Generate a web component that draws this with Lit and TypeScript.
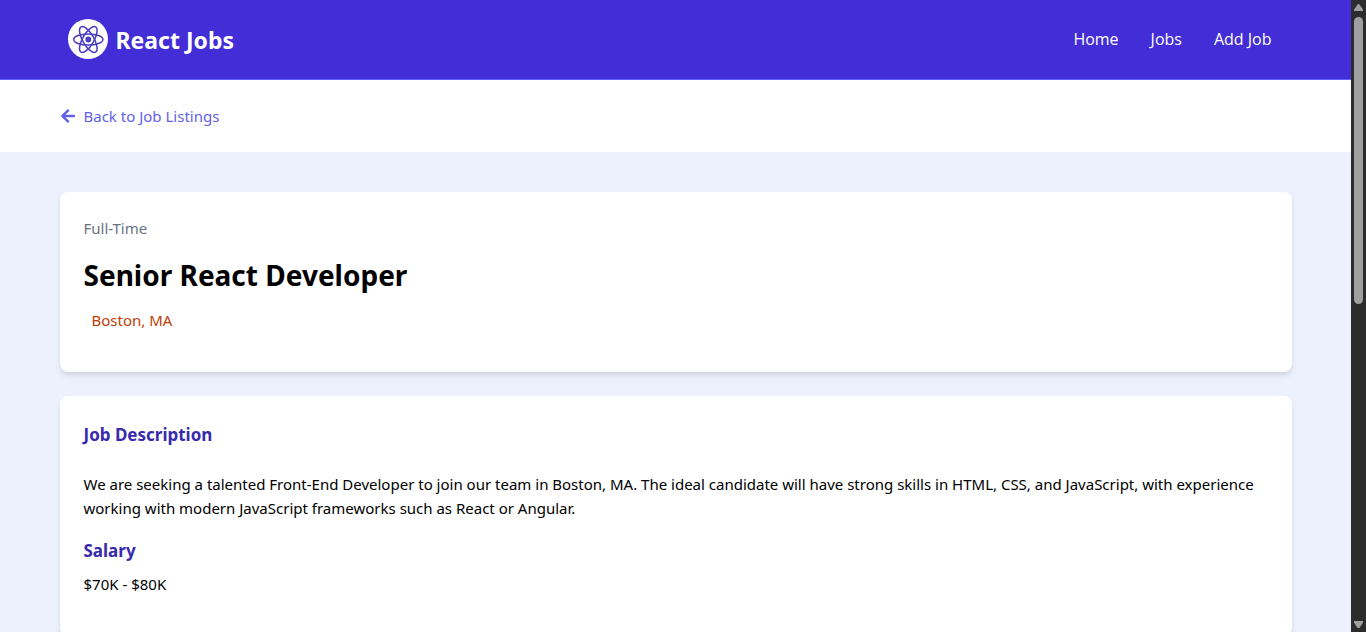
import { LitElement, html, css } from "lit";
import { customElement, property } from "lit/decorators.js";

interface Job {
  type: string;
  title: string;
  location: string;
  description: string;
  salary: string;
}

const job: Job = {
  type: "Full-Time",
  title: "Senior React Developer",
  location: "Boston, MA",
  description:
    "We are seeking a talented Front-End Developer to join our team in Boston, MA. The ideal candidate will have strong skills in HTML, CSS, and JavaScript, with experience working with modern JavaScript frameworks such as React or Angular.",
  salary: "$70K - $80K",
};

@customElement("site-header")
class SiteHeader extends LitElement {
  static styles = css`
    :host {
      display: block;
      box-sizing: border-box;
      background: #432dd7;
      border-bottom: 1px solid #615fff;
    }
    .inner {
      box-sizing: border-box;
      max-width: 1280px;
      margin: 0 auto;
      padding: 19px 32px 20px;
      display: flex;
      align-items: center;
      justify-content: space-between;
    }
    .brand {
      display: flex;
      align-items: center;
      gap: 8px;
      color: #fff;
      text-decoration: none;
      font-size: 23px;
      line-height: 32px;
      font-weight: 700;
    }
    .name {
      padding-top: 2px;
    }
    .logo {
      width: 40px;
      height: 40px;
      display: block;
    }
    .links {
      display: flex;
      gap: 8px;
      font-family: "Open Sans", "Noto Sans", sans-serif;
      font-size: 16px;
    }
    .link {
      padding: 8px 12px;
      border-radius: 6px;
      color: #fff;
      text-decoration: none;
      line-height: 24px;
    }
    .link:hover {
      background: #101828;
    }
  `;

  render() {
    return html`
      <div class="inner">
        <a class="brand" href="#home">
          <svg class="logo" viewBox="0 0 40 40" aria-hidden="true">
            <circle cx="20" cy="20" r="20" fill="#fff" />
            <g fill="none" stroke="#4a3cc4" stroke-width="1.5">
              <ellipse cx="20.300" cy="20.500" rx="14.600" ry="5.600" />
              <ellipse cx="20.300" cy="20.500" rx="14.600" ry="5.600" transform="rotate(60 20.300 20.500)" />
              <ellipse cx="20.300" cy="20.500" rx="14.600" ry="5.600" transform="rotate(120 20.300 20.500)" />
            </g>
            <circle cx="20.300" cy="20.500" r="2.900" fill="#4a3cc4" />
          </svg>
          <span class="name">React Jobs</span>
        </a>
        <nav class="links">
          <a class="link" href="#home">Home</a>
          <a class="link" href="#jobs">Jobs</a>
          <a class="link" href="#add-job">Add Job</a>
        </nav>
      </div>
    `;
  }
}

@customElement("job-page")
class JobPage extends LitElement {
  @property({ attribute: false }) job!: Job;

  static styles = css`
    :host {
      display: block;
    }
    .container {
      box-sizing: border-box;
      max-width: 1280px;
      margin: 0 auto;
      padding: 24px;
    }
    .back {
      display: flex;
      align-items: center;
      gap: 8px;
      width: fit-content;
      color: #625fea;
      text-decoration: none;
      line-height: 24px;
    }
    .arrow {
      width: 16px;
      height: 16px;
    }
    .details {
      background: #edf1fe;
    }
    .cards {
      display: grid;
      gap: 24px;
      padding: 40px 24px;
    }
    .card {
      padding: 24px;
      background: #fff;
      border-radius: 8px;
      box-shadow:
        0 4px 6px -1px rgb(0 0 0 / 0.1),
        0 2px 4px -2px rgb(0 0 0 / 0.1);
    }
    p {
      margin: 0 0 16px;
      line-height: 24px;
    }
    .type {
      color: #6a7282;
    }
    .title {
      margin: 0 0 14px;
      font-size: 28px;
      line-height: 38px;
      font-weight: 700;
    }
    .location {
      padding-left: 8px;
      color: #bf3d06;
    }
    .heading {
      margin: 0 0 6px;
      color: #372aac;
      font-size: 17px;
      line-height: 30px;
      font-weight: 700;
    }
    .lead {
      margin-bottom: 22px;
    }
  `;

  render() {
    return html`
      <section>
        <div class="container">
          <a class="back" href="#jobs">
            <svg class="arrow" viewBox="0 0 448 512" fill="currentColor" aria-hidden="true">
              <path
                d="M257.5 445.1l-22.2 22.2c-9.4 9.4-24.6 9.4-33.9 0L7 273c-9.4-9.4-9.4-24.6 0-33.9L201.4 44.7c9.4-9.4 24.6-9.4 33.9 0l22.2 22.2c9.5 9.5 9.3 25-.4 34.3L136.6 216H424c13.3 0 24 10.7 24 24v32c0 13.3-10.7 24-24 24H136.6l120.5 114.8c9.8 9.3 10 24.8.4 34.3z"
              />
            </svg>
            Back to Job Listings
          </a>
        </div>
      </section>
      <section class="details">
        <main class="container cards">
          <div class="card">
            <p class="type">${this.job.type}</p>
            <h1 class="title">${this.job.title}</h1>
            <p class="location">${this.job.location}</p>
          </div>
          <div class="card">
            <h3 class="heading lead">Job Description</h3>
            <p>${this.job.description}</p>
            <h3 class="heading">Salary</h3>
            <p>${this.job.salary}</p>
          </div>
        </main>
      </section>
    `;
  }
}

@customElement("scroll-rail")
class ScrollRail extends LitElement {
  static styles = css`
    :host {
      display: grid;
      grid-template-rows: 17px 1fr 17px;
      justify-items: center;
      background: #2c2c2c;
    }
    .arrow {
      width: 15px;
      height: 17px;
      fill: #9f9f9f;
    }
    .track {
      width: 9px;
    }
    .thumb {
      height: 48%;
      border-radius: 5px;
      background: #9f9f9f;
    }
  `;

  render() {
    return html`
      <svg class="arrow" viewBox="0 0 15 17"><path d="M7 4h1l4 5.500v1.500H3V9.500z" /></svg>
      <div class="track"><div class="thumb"></div></div>
      <svg class="arrow" viewBox="0 0 15 17"><path d="M3 6h9v1.500L8.500 13h-2L3 7.500z" /></svg>
    `;
  }
}

@customElement("app-root")
class AppRoot extends LitElement {
  static styles = css`
    :host {
      display: grid;
      grid-template-columns: minmax(0, 1fr) 15px;
      height: 100vh;
      overflow: hidden;
      background: #fff;
      color: #000;
      font-family: "Noto Sans", "Open Sans", sans-serif;
      font-size: 15px;
    }
    .view {
      min-height: 0;
      overflow-y: auto;
      scrollbar-width: none;
    }
  `;

  render() {
    return html`
      <div class="view">
        <site-header></site-header>
        <job-page .job=${job}></job-page>
      </div>
      <scroll-rail aria-hidden="true"></scroll-rail>
    `;
  }
}
